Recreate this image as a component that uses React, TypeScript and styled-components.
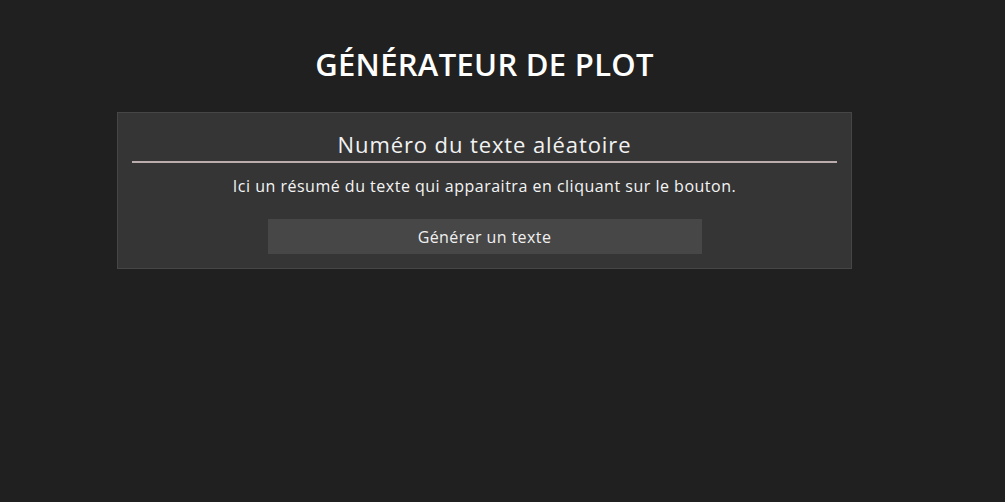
import React from "react";
import styled, { createGlobalStyle } from "styled-components";

const Global = createGlobalStyle`
  html, body { margin: 0; padding: 0; background: #202020; }
  body { font-family: "Open Sans", "Noto Sans", sans-serif; color: #ffffff; }
`;

const Page = styled.main`
  width: 969px;
  display: flex;
  flex-direction: column;
  align-items: center;
  padding-top: 42px;
`;

const Title = styled.h1`
  margin: 0 0 26px;
  font-size: 31px;
  font-weight: 600;
  letter-spacing: 0.3px;
  line-height: 44px;
  color: #ffffff;
`;

const Card = styled.section`
  box-sizing: border-box;
  width: 735px;
  background: #353535;
  border: 1px solid #464646;
  padding: 14px 14px 14px;
  display: flex;
  flex-direction: column;
  align-items: center;
`;

const CardTitle = styled.h2`
  align-self: stretch;
  margin: 0;
  font-size: 22px;
  font-weight: 400;
  letter-spacing: 0.9px;
  line-height: 34px;
  text-align: center;
  color: #f2f2f2;
  border-bottom: 2px solid #bbadad;
`;

const Summary = styled.p`
  margin: 12px 0 0;
  font-size: 16px;
  letter-spacing: 0.5px;
  line-height: 22px;
  color: #f4f4f4;
`;

const Button = styled.button`
  margin-top: 22px;
  width: 434px;
  height: 35px;
  border: none;
  background: #474747;
  color: #f0f0f0;
  font-family: inherit;
  font-size: 16px;
  letter-spacing: 0.4px;
  cursor: pointer;
`;

export default function App() {
  return (
    <>
      <Global />
      <Page>
        <Title>GÉNÉRATEUR DE PLOT</Title>
        <Card>
          <CardTitle>Numéro du texte aléatoire</CardTitle>
          <Summary>Ici un résumé du texte qui apparaitra en cliquant sur le bouton.</Summary>
          <Button>Générer un texte</Button>
        </Card>
      </Page>
    </>
  );
}
